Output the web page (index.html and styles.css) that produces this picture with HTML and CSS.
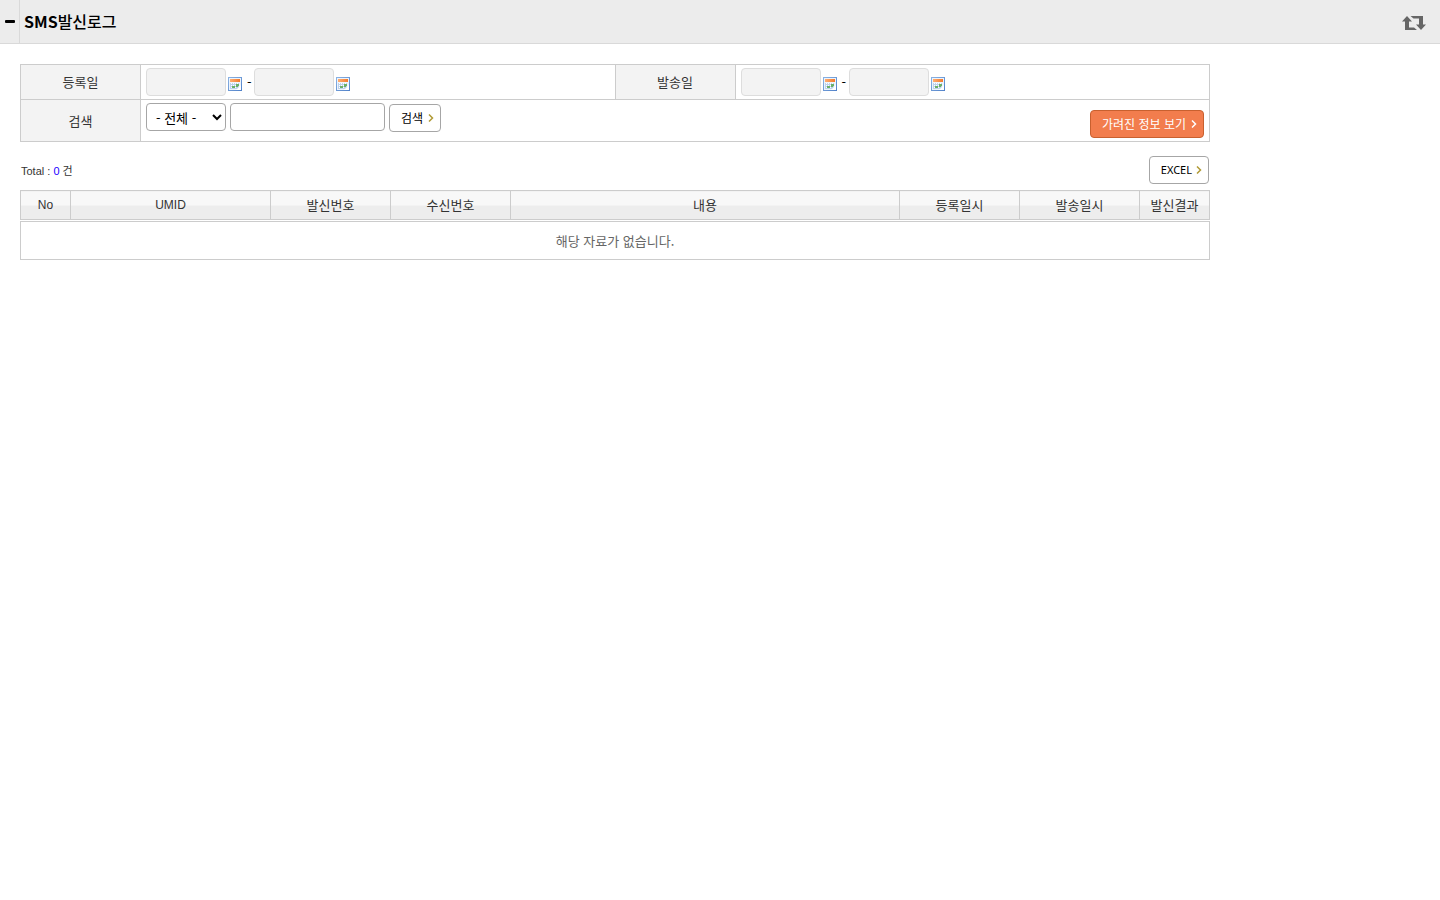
FILE: index.html
```html
<!DOCTYPE html>
<html lang="ko">
<head>
<meta charset="utf-8">
<title>SMS발신로그</title>
<link rel="stylesheet" href="styles.css">
</head>
<body>
<svg class="defs" width="0" height="0" aria-hidden="true">
  <defs>
    <linearGradient id="cal-frame" x1="0" y1="0" x2="1" y2="1"><stop offset="0" stop-color="#8db4e4"/><stop offset="1" stop-color="#4f80c8"/></linearGradient>
    <linearGradient id="cal-head" x1="0" y1="0" x2="1" y2="0"><stop offset="0" stop-color="#ffae72"/><stop offset="1" stop-color="#f47a2c"/></linearGradient>
    <symbol id="calendar" viewBox="0 0 14 14">
      <rect width="14" height="14" fill="url(#cal-frame)"/>
      <rect x="1" y="1" width="12" height="12" fill="#edf4fc"/>
      <rect x="2" y="2" width="10" height="3" fill="url(#cal-head)"/>
      <rect x="2" y="6" width="9" height="6" fill="#bdd2ec"/>
      <path d="M3 6h1v1H3zM5 6h1v1H5zM7 6h1v1H7zM9 6h1v1H9zM3 8h1v1H3zM5 8h1v1H5zM7 8h1v1H7zM3 10h1v1H3zM7 10h1v1H7z" fill="#fff"/>
      <path d="M8 7h3v2H8zM4 9h3v2H4zM8 9h2v1H8z" fill="#6bb068"/>
      <path d="M8 13l5-5v5z" fill="#fff"/>
    </symbol>
    <symbol id="chevron" viewBox="0 0 6 8"><path d="M1 0.5L4.5 4L1 7.5" fill="none" stroke="currentColor" stroke-width="1.5"/></symbol>
  </defs>
</svg>
<header class="topbar">
  <button class="fold" type="button" aria-label="메뉴 접기"><span class="minus"></span></button>
  <h1 class="title"><b>SMS</b>발신로그</h1>
  <button class="reload" type="button" aria-label="새로고침">
    <svg width="24" height="14" viewBox="0 0 24 14" fill="#666"><path d="M5 0L10 5.5H7V11.5H12L15 14H3V5.5H0Z"/><path d="M19 14L24 8.5H21V0H8.5L11.5 2.5H17V8.5H14Z"/></svg>
  </button>
</header>
<main class="content">
  <form>
    <table class="search">
      <colgroup><col class="label-col"><col><col class="label-col"><col></colgroup>
      <tr>
        <th scope="row">등록일</th>
        <td><div class="dates">
          <input class="field date" type="text" aria-label="등록일 시작" disabled>
          <button class="cal" type="button" aria-label="등록일 시작 선택"><svg width="14" height="14"><use href="#calendar"/></svg></button>
          <span class="dash">-</span>
          <input class="field date" type="text" aria-label="등록일 종료" disabled>
          <button class="cal" type="button" aria-label="등록일 종료 선택"><svg width="14" height="14"><use href="#calendar"/></svg></button>
        </div></td>
        <th scope="row">발송일</th>
        <td><div class="dates">
          <input class="field date" type="text" aria-label="발송일 시작" disabled>
          <button class="cal" type="button" aria-label="발송일 시작 선택"><svg width="14" height="14"><use href="#calendar"/></svg></button>
          <span class="dash">-</span>
          <input class="field date" type="text" aria-label="발송일 종료" disabled>
          <button class="cal" type="button" aria-label="발송일 종료 선택"><svg width="14" height="14"><use href="#calendar"/></svg></button>
        </div></td>
      </tr>
      <tr>
        <th scope="row">검색</th>
        <td colspan="3"><div class="query">
          <select class="field kind" aria-label="검색 구분"><option>- 전체 -</option></select>
          <input class="field keyword" type="text" aria-label="검색어">
          <button class="btn find" type="submit">검색<svg width="6" height="8"><use href="#chevron"/></svg></button>
          <button class="btn reveal" type="button">가려진 정보 보기<svg width="6" height="8"><use href="#chevron"/></svg></button>
        </div></td>
      </tr>
    </table>
  </form>
  <div class="summary">
    <p class="total">Total : <span class="count">0</span> 건</p>
    <button class="btn excel" type="button">EXCEL<svg width="6" height="8"><use href="#chevron"/></svg></button>
  </div>
  <table class="log">
    <colgroup><col class="no"><col class="umid"><col class="mid"><col class="mid"><col><col class="mid"><col class="mid"><col class="result"></colgroup>
    <thead>
      <tr><th class="latin">No</th><th class="latin">UMID</th><th>발신번호</th><th>수신번호</th><th>내용</th><th>등록일시</th><th>발송일시</th><th>발신결과</th></tr>
    </thead>
    <tbody>
      <tr class="spacer" aria-hidden="true"><td colspan="8"></td></tr>
      <tr><td class="empty" colspan="8">해당 자료가 없습니다.</td></tr>
    </tbody>
  </table>
</main>
</body>
</html>
```
FILE: styles.css
```css
* { box-sizing: border-box; }

body {
  margin: 0;
  background: #fff;
  color: #333;
  font: 13px/20px "Noto Sans CJK KR", sans-serif;
}

button, input, select { font: inherit; margin: 0; }
button { cursor: pointer; }
.defs { position: absolute; }

.topbar {
  display: flex;
  align-items: stretch;
  height: 44px;
  background: #ececec;
  border-bottom: 1px solid #d9d9d9;
}

.fold {
  display: flex;
  align-items: center;
  justify-content: center;
  width: 20px;
  padding: 0;
  border: 0;
  border-right: 1px solid #d9d9d9;
  background: none;
}

.minus { width: 10px; height: 3px; border-radius: 1px; background: #000; }

.title {
  flex: 1;
  margin: 0;
  padding-left: 4px;
  color: #000;
  font-size: 16px;
  font-weight: 500;
  line-height: 43px;
}

.title b { font-weight: 700; }

.reload {
  display: flex;
  align-items: center;
  padding: 3px 14px 0;
  border: 0;
  background: none;
}

.content { max-width: 1230px; padding: 20px; }

table { width: 100%; table-layout: fixed; border-collapse: collapse; }
th { font-weight: 400; text-align: center; }
th, td { padding: 0; border: 1px solid #ccc; }

.label-col { width: 120px; }
.search th { background: #f3f3f3; }

.dates { display: flex; align-items: center; height: 34px; padding-left: 5px; }

.field {
  height: 28px;
  border: 1px solid #a6a6a6;
  border-radius: 4px;
  background: #fff;
  color: #000;
}

.date { width: 80px; border-color: #ddd; background: #f3f3f3; }

.cal {
  display: flex;
  padding: 3px 0 0;
  margin: 0 5px 0 2px;
  border: 0;
  background: none;
}

.dash { width: 7px; color: #000; }

.query { display: flex; align-items: flex-start; gap: 4px; height: 41px; padding: 3px 5px 3px; }
.kind { width: 80px; padding: 0 0 0 5px; }
.keyword { width: 155px; }

.btn {
  display: flex;
  align-items: center;
  justify-content: center;
  gap: 5px;
  height: 28px;
  padding: 0 6px 0 11px;
  border: 1px solid #a6a6a6;
  border-radius: 4px;
  background: #fff;
  color: #000;
  font-size: 12px;
}

.btn svg { color: #b09a35; }
.find { margin-top: 1px; }

.reveal {
  align-self: flex-end;
  margin-left: auto;
  border-color: #c8602f;
  background: #f27d4d;
  color: #fff;
}

.reveal svg { color: #fff; }

.summary {
  display: flex;
  align-items: center;
  justify-content: space-between;
  padding: 14px 1px 6px;
}

.total { margin: 2px 0 0; font: 11px/16px "Liberation Sans", "Noto Sans CJK KR", sans-serif; }
.count { color: #20f; }
.excel { gap: 4px; font-family: "Noto Sans", sans-serif; font-size: 11px; }

.no { width: 50px; }
.umid { width: 200px; }
.mid { width: 120px; }
.result { width: 70px; }

.log th {
  height: 29px;
  background: linear-gradient(#f8f8f8 50%, #ededed 50%);
}

.log .latin { font-family: "Liberation Sans", sans-serif; font-size: 12px; }
.log .spacer td { height: 2px; border-width: 1px 0; }
.empty { height: 38px; color: #666; text-align: center; }
```
